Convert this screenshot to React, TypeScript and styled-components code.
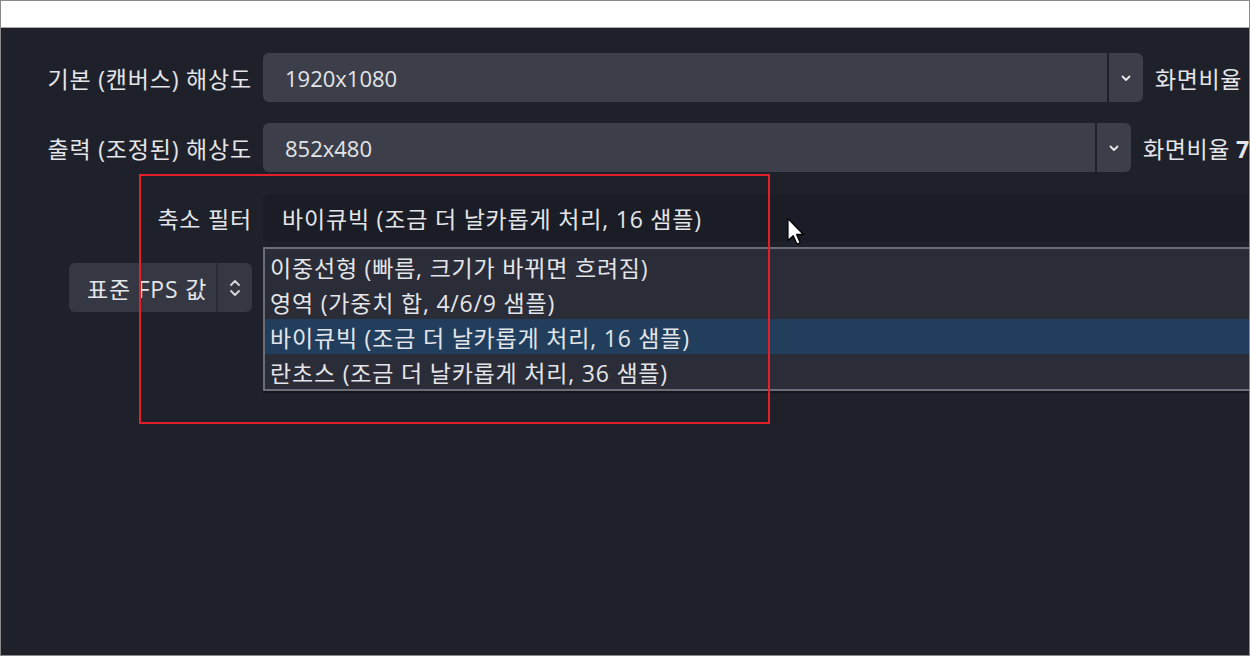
import React from 'react';
import styled, { createGlobalStyle } from 'styled-components';

const GlobalStyle = createGlobalStyle`
    html, body {
        margin: 0;
        padding: 0;
        background: #ffffff;
    }
    body {
        font-family: 'Open Sans', 'Noto Sans CJK KR', sans-serif;
    }
`;

const Frame = styled.div`
    width: 1250px;
    height: 656px;
    box-sizing: border-box;
    border: 1px solid #8a8a8a;
    display: flex;
    flex-direction: column;
    overflow: hidden;
    background: #ffffff;
`;

const TopStrip = styled.div`
    height: 26px;
    flex-shrink: 0;
    background: #ffffff;
    border-bottom: 1px solid #a9a9a9;
`;

const Panel = styled.div`
    position: relative;
    flex: 1;
    background: #1f212a;
    padding: 25px 0 0 30px;
    overflow: hidden;
    color: #e4e5e9;
    font-size: 23px;
    letter-spacing: 0.8px;
`;

const Form = styled.div`
    display: grid;
    grid-template-columns: 221px max-content;
    grid-auto-rows: 49px;
    column-gap: 11px;
    row-gap: 21px;
`;

const Label = styled.div`
    display: flex;
    align-items: center;
    justify-content: flex-end;
    white-space: nowrap;
`;

const FieldRow = styled.div`
    display: flex;
    align-items: center;
    white-space: nowrap;
`;

const Combo = styled.div<{ $width: number }>`
    display: flex;
    height: 49px;
    width: ${(p) => p.$width}px;
    gap: 2px;
`;

const ComboText = styled.div`
    flex: 1;
    display: flex;
    align-items: center;
    padding-left: 22px;
    font-size: 22px;
    letter-spacing: 0;
    background: #3c3f4a;
    border-radius: 6px 0 0 6px;
`;

const ComboArrow = styled.div`
    width: 34px;
    display: flex;
    align-items: center;
    justify-content: center;
    background: #3c3f4a;
    border-radius: 0 6px 6px 0;
`;

const Aspect = styled.span`
    margin-left: 12px;
    letter-spacing: 0.6px;

    b {
        font-weight: 700;
        margin-left: 6px;
    }
`;

const FilterBox = styled.div`
    width: 1000px;
    height: 48px;
    display: flex;
    align-items: center;
    padding-left: 19px;
    background: #1b1d26;
    border-radius: 6px;
`;

const FpsButton = styled.div`
    justify-self: end;
    width: 183px;
    height: 49px;
    display: flex;
    background: #353843;
    border-radius: 6px;
    overflow: hidden;
`;

const FpsText = styled.div`
    flex: 1;
    display: flex;
    align-items: center;
    padding-left: 18px;
    border-right: 2px solid #2a2d36;
    white-space: nowrap;
`;

const FpsSpin = styled.div`
    width: 34px;
    display: flex;
    align-items: center;
    justify-content: center;
`;

const Popup = styled.div`
    position: absolute;
    left: 262px;
    top: 219px;
    width: 1000px;
    background: #2a2c37;
    border: 2px solid #6b6e77;
    box-shadow: 0 2px 0 #15161c;
`;

const Option = styled.div<{ $active?: boolean }>`
    height: 35px;
    display: flex;
    align-items: center;
    padding-left: 5px;
    white-space: nowrap;
    background: ${(p) => (p.$active ? '#223e5d' : 'transparent')};
`;

const Highlight = styled.div`
    position: absolute;
    left: 138px;
    top: 146px;
    width: 631px;
    height: 250px;
    box-sizing: border-box;
    border: 2px solid #e3202a;
    pointer-events: none;
`;

const Cursor = styled.svg`
    position: absolute;
    left: 785px;
    top: 189px;
`;

const options = [
    '이중선형 (빠름, 크기가 바뀌면 흐려짐)',
    '영역 (가중치 합, 4/6/9 샘플)',
    '바이큐빅 (조금 더 날카롭게 처리, 16 샘플)',
    '란초스 (조금 더 날카롭게 처리, 36 샘플)',
];

function ChevronDown() {
    return (
        <svg width="12" height="8" viewBox="0 0 12 8">
            <path d="M2.5 2.5 L6 6 L9.5 2.5" fill="none" stroke="#e8e9ec" strokeWidth="1.8" strokeLinecap="round" strokeLinejoin="round" />
        </svg>
    );
}

function ChevronUpDown() {
    return (
        <svg width="14" height="22" viewBox="0 0 14 22">
            <path d="M3 8 L7 4 L11 8" fill="none" stroke="#d8d9dd" strokeWidth="1.8" strokeLinecap="round" strokeLinejoin="round" />
            <path d="M3 14 L7 18 L11 14" fill="none" stroke="#d8d9dd" strokeWidth="1.8" strokeLinecap="round" strokeLinejoin="round" />
        </svg>
    );
}

export default function App() {
    return (
        <Frame>
            <GlobalStyle />
            <TopStrip />
            <Panel>
                <Form>
                    <Label>기본 (캔버스) 해상도</Label>
                    <FieldRow>
                        <Combo $width={880}>
                            <ComboText>1920x1080</ComboText>
                            <ComboArrow>
                                <ChevronDown />
                            </ComboArrow>
                        </Combo>
                        <Aspect>화면비율</Aspect>
                    </FieldRow>

                    <Label>출력 (조정된) 해상도</Label>
                    <FieldRow>
                        <Combo $width={868}>
                            <ComboText>852x480</ComboText>
                            <ComboArrow>
                                <ChevronDown />
                            </ComboArrow>
                        </Combo>
                        <Aspect>
                            화면비율<b>7</b>
                        </Aspect>
                    </FieldRow>

                    <Label>축소 필터</Label>
                    <FieldRow>
                        <FilterBox>바이큐빅 (조금 더 날카롭게 처리, 16 샘플)</FilterBox>
                    </FieldRow>

                    <FpsButton>
                        <FpsText>표준 FPS 값</FpsText>
                        <FpsSpin>
                            <ChevronUpDown />
                        </FpsSpin>
                    </FpsButton>
                    <div />
                </Form>

                <Popup>
                    {options.map((o, i) => (
                        <Option key={i} $active={i === 2}>
                            {o}
                        </Option>
                    ))}
                </Popup>

                <Highlight />

                <Cursor width="22" height="32" viewBox="0 0 20 30">
                    <path d="M1.5 1.5 L1.5 22 L6.5 17.5 L10 25.5 L13 24.2 L9.6 16.4 L16 16.4 Z" fill="#ffffff" stroke="#000000" strokeWidth="1.2" strokeLinejoin="round" />
                </Cursor>
            </Panel>
        </Frame>
    );
}
